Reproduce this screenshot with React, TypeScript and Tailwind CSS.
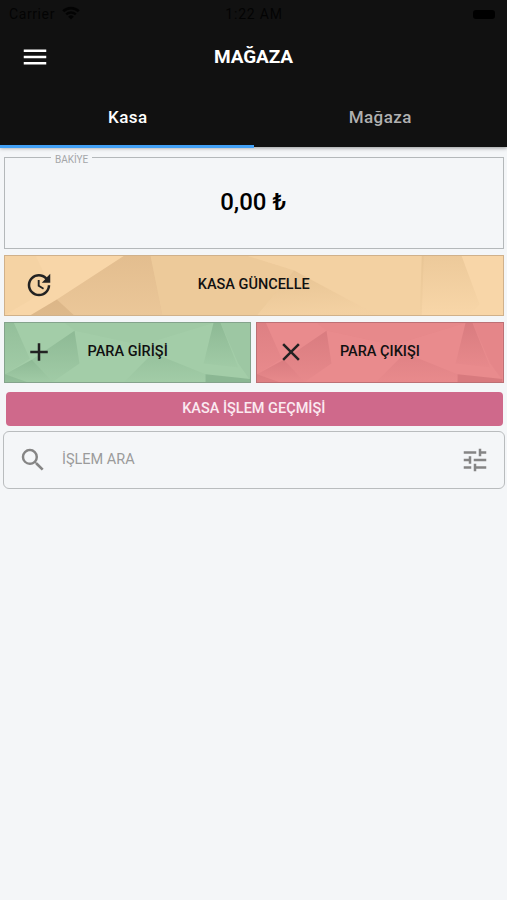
import type { ReactNode } from "react";
import { MdAdd, MdClose, MdMenu, MdSearch, MdTune, MdUpdate } from "react-icons/md";

function StatusBar() {
  return (
    <div className="relative flex h-7 items-center justify-between pl-[9px] pr-3 text-[14px] text-black/80">
      <div className="flex items-center gap-[7px]">
        <span className="tracking-[0.6px]">Carrier</span>
        <svg width="18" height="14" viewBox="0 0 18 14" fill="none" stroke="currentColor" className="-mt-0.5">
          <path d="M1.2 5.2a11.2 11.2 0 0 1 15.6 0" strokeWidth="2.8" />
          <path d="M4.2 8.4a7 7 0 0 1 9.6 0" strokeWidth="2.4" />
          <path d="M9 13.5 6.2 10.7a4 4 0 0 1 5.6 0Z" fill="currentColor" stroke="none" />
        </svg>
      </div>
      <span className="absolute inset-x-0 pl-px text-center tracking-[0.8px]">1:22 AM</span>
      <div className="h-[9px] w-[22px] rounded-[3px] bg-black" />
    </div>
  );
}

function Header() {
  return (
    <header className="h-[147px] bg-[#111111] shadow-[0_1px_4px_rgba(0,0,0,0.4)]">
      <StatusBar />
      <div className="grid h-[58px] grid-cols-[1fr_auto_1fr] items-center pl-5">
        <button type="button" aria-label="Menü" className="justify-self-start text-white">
          <MdMenu size={30} />
        </button>
        <h1 className="-ml-5 pb-px text-[19px] leading-6 font-bold tracking-[-0.1px] text-white">MAĞAZA</h1>
      </div>
      <nav className="grid h-[62px] grid-cols-2 text-[17px] font-medium tracking-[0.4px]">
        <button
          type="button"
          className="h-[62px] border-b-[3px] border-[#42a0f5] pt-1 pl-0.5 text-white"
        >
          Kasa
        </button>
        <button type="button" className="pt-px text-[#b0b0b0]">
          Mağaza
        </button>
      </nav>
    </header>
  );
}

function WidePattern() {
  return (
    <svg className="absolute inset-0 h-full w-full" viewBox="0 0 499 61" preserveAspectRatio="none">
      <defs>
        <linearGradient id="wide-a" x1="0" y1="0" x2="0" y2="1">
          <stop offset="0" stopColor="#a07040" stopOpacity="0.24" />
          <stop offset="1" stopColor="#a07040" stopOpacity="0.15" />
        </linearGradient>
        <linearGradient id="wide-b" x1="0" y1="0" x2="0.2" y2="1">
          <stop offset="0" stopColor="#a07840" stopOpacity="0.2" />
          <stop offset="1" stopColor="#a07840" stopOpacity="0.06" />
        </linearGradient>
        <linearGradient id="wide-c" x1="0" y1="0" x2="0" y2="1">
          <stop offset="0" stopColor="#a07840" stopOpacity="0.13" />
          <stop offset="1" stopColor="#a07840" stopOpacity="0" />
        </linearGradient>
      </defs>
      <path d="M0 0h31l15 33-46 28Z" fill="#a07840" fillOpacity="0.03" />
      <path d="M119 0h27l12 61H26l26-16Z" fill="url(#wide-a)" />
      <path d="M146 0h97l47 15-37 46H158Z" fill="#a07840" fillOpacity="0.13" />
      <path d="M26 61l26-16 17 16Z" fill="#8a6030" fillOpacity="0.13" />
      <path d="M243 0h177l-2 61h-45l-83-46Z" fill="#a07840" fillOpacity="0.05" />
      <path d="M290 15l83 46H253Z" fill="url(#wide-b)" />
      <path d="M418 0h40l18 50-10 11h-50Z" fill="url(#wide-c)" />
    </svg>
  );
}

function HalfPattern({ id, shade }: { id: string; shade: string }) {
  return (
    <svg className="absolute inset-0 h-full w-full" viewBox="0 0 247 61" preserveAspectRatio="none">
      <defs>
        <linearGradient id={id} x1="0" y1="0" x2="0" y2="1">
          <stop offset="0" stopColor={shade} stopOpacity="0.2" />
          <stop offset="1" stopColor={shade} stopOpacity="0.02" />
        </linearGradient>
      </defs>
      <path d="M0 0h9l16 37-25 16Z" fill={`url(#${id})`} fillOpacity="0.7" />
      <path d="M70 8l5 34-27 19-21-23Z" fill={`url(#${id})`} />
      <path d="M0 53l27-15 21 23H0Z" fill={`url(#${id})`} />
      <path d="M70 8l67 15 73-23H60Z" fill={shade} fillOpacity="0.02" />
      <path d="M149 31l53 22v8h-82Z" fill={`url(#${id})`} fillOpacity="0.6" />
      <path d="M210 0h7l18 46-35-4Z" fill={`url(#${id})`} />
      <path d="M217 0h30v59l-12-17Z" fill={shade} fillOpacity="0.05" />
      <path d="M202 53l45 5v3h-45Z" fill={shade} fillOpacity="0.22" />
      <path d="M0 53l22 8H0Z" fill={shade} fillOpacity="0.12" />
    </svg>
  );
}

interface ActionButtonProps {
  icon: ReactNode;
  label: string;
  pattern: ReactNode;
  className: string;
}

function ActionButton({ icon, label, pattern, className }: ActionButtonProps) {
  return (
    <button type="button" className={`relative h-[61px] overflow-hidden ${className}`}>
      {pattern}
      <span className="relative flex h-full items-center justify-center pb-px text-[14.5px] font-medium text-[#111]">
        {label}
      </span>
      <span className="absolute top-[14px] left-[18.5px] text-[#222]">{icon}</span>
    </button>
  );
}

export default function App() {
  return (
    <div className="min-h-[900px] bg-[#f4f6f8] font-[Roboto,sans-serif]">
      <Header />
      <main className="pt-[7px] pr-[3.5px] pl-1">
        <fieldset className="h-[95px] border border-[#b4b8ba] pl-[46px]">
          <legend className="h-[7px] px-1 text-[10px] leading-[12px] text-[#a4a6a8]">BAKİYE</legend>
          <div className="-ml-[47px] pt-[27px] text-center text-[24px] leading-[28px] font-medium text-black">
            0,00 ₺
          </div>
        </fieldset>

        <div className="mt-1.5 grid grid-cols-2 gap-x-[5px] gap-y-1.5">
          <ActionButton
            icon={<MdUpdate size={30} />}
            label="KASA GÜNCELLE"
            pattern={<WidePattern />}
            className="col-span-2 border border-[#d0b18b] bg-[#f8d6a8]"
          />
          <ActionButton
            icon={<MdAdd size={30} />}
            label="PARA GİRİŞİ"
            pattern={<HalfPattern id="half-green" shade="#386b48" />}
            className="border border-[#84a38c] bg-[#a3cda8]"
          />
          <ActionButton
            icon={<MdClose size={30} />}
            label="PARA ÇIKIŞI"
            pattern={<HalfPattern id="half-red" shade="#993f4a" />}
            className="border border-[#bd7075] bg-[#e98b8d]"
          />
        </div>

        <div className="mr-px ml-0.5 mt-[9px] flex h-[34px] items-center justify-center rounded-[4px] bg-[#cf698b] pr-px pb-px text-[14.5px] font-medium text-[#fbeaf1]">
          KASA İŞLEM GEÇMİŞİ
        </div>

        <div className="-mr-px -ml-px mt-[5px] flex h-[58px] items-center rounded-[6px] border border-[#b9bcbe] px-[14px] text-[#858585]">
          <MdSearch size={30} />
          <input
            type="text"
            placeholder="İŞLEM ARA"
            className="ml-[14px] flex-1 text-[14.5px] outline-none placeholder:text-[#9b9b9b]"
          />
          <MdTune size={30} />
        </div>
      </main>
    </div>
  );
}
